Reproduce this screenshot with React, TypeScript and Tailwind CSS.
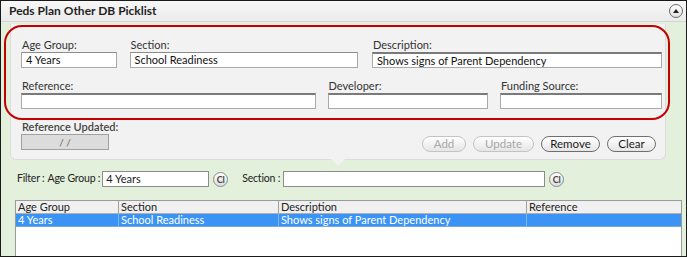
import React from 'react';

const font = { fontFamily: 'Lato, "Open Sans", sans-serif' };

const Field: React.FC<{ label: string; value?: string; w: string; dark?: boolean }> = ({ label, value, w, dark }) => (
  <div className={`flex flex-col flex-none ${w}`}>
    <span className="text-[11px] leading-[13px] text-[#333] pl-[1px] whitespace-nowrap">{label}</span>
    <div
      className={`mt-[1px] h-[16px] bg-white border border-[#a9a9a9] ${dark ? 'border-t-[#7a7a7a] border-t-2' : 'border-t-[#8c8c8c]'} px-[4px] text-[11px] leading-[13px] text-[#111] whitespace-nowrap overflow-hidden`}
    >
      {value}
    </div>
  </div>
);

const Pill: React.FC<{ label: string; w: string; disabled?: boolean }> = ({ label, w, disabled }) => (
  <div
    className={`${w} h-[16px] rounded-full border flex items-center justify-center text-[11.5px] leading-none bg-gradient-to-b from-white to-[#e6e6e6] ${
      disabled ? 'border-[#c4c4c4] text-[#a8a8a8]' : 'border-[#6f6f6f] text-[#1a1a1a]'
    }`}
  >
    {label}
  </div>
);

const ClearIcon = () => (
  <div className="flex-none w-[15px] h-[15px] rounded-full border border-[#8a8a8a] bg-gradient-to-b from-white to-[#dcdcdc] flex items-center justify-center text-[9px] leading-none text-[#444] font-bold">
    Cl
  </div>
);

export default function App() {
  return (
    <div className="w-[687px] h-[257px] border border-[#1a1a1a] bg-[#e3f0dc] overflow-hidden relative" style={font}>
      {/* title bar */}
      <div className="h-[21px] bg-gradient-to-b from-[#f7f7f7] to-[#ebebeb] border-b border-[#d4d4d4] flex items-center justify-between pl-[8px] pr-[3px]">
        <span className="text-[12px] font-bold text-[#1f1f1f] whitespace-nowrap">Peds Plan Other DB Picklist</span>
        <div className="w-[14px] h-[14px] rounded-full border border-[#6a6a6a] bg-gradient-to-b from-white to-[#e0e0e0] flex items-center justify-center">
          <div className="w-0 h-0 border-l-[3.5px] border-r-[3.5px] border-b-[4px] border-l-transparent border-r-transparent border-b-[#222]" />
        </div>
      </div>

      {/* edit panel */}
      <div className="relative ml-[9px] mt-[2px] w-[656px] h-[136px] bg-[#f2f2f2] rounded-b-[6px] border-x border-b border-[#dcdcdc] pl-[10px] pr-[3px] pt-[14px]">
        <div className="flex">
          <Field label="Age Group:" value="4 Years" w="w-[96px]" />
          <div className="w-[13px]" />
          <Field label="Section:" value="School Readiness" w="w-[228px]" />
          <div className="w-[15px]" />
          <Field label="Description:" value="Shows signs of Parent Dependency" w="w-[290px]" dark />
        </div>
        <div className="flex mt-[11px]">
          <Field label="Reference:" w="w-[295px]" dark />
          <div className="w-[12px]" />
          <Field label="Developer:" w="w-[160px]" dark />
          <div className="w-[13px]" />
          <Field label="Funding Source:" w="w-[162px]" dark />
        </div>
        <div className="flex items-start mt-[11px]">
          <div className="flex flex-col w-[88px] flex-none">
            <span className="text-[11px] leading-[13px] font-semibold text-[#444] pl-[1px] whitespace-nowrap">Reference Updated:</span>
            <div className="mt-[1px] h-[16px] bg-[#dcdcdc] border border-[#a0a0a0] flex items-center justify-center text-[10px] text-[#666]">
              / /
            </div>
          </div>
          <div className="flex-1 flex justify-end gap-[7px] mt-[16px] pr-[6px]">
            <Pill label="Add" w="w-[44px]" disabled />
            <Pill label="Update" w="w-[61px]" disabled />
            <Pill label="Remove" w="w-[59px]" />
            <Pill label="Clear" w="w-[49px]" />
          </div>
        </div>
        {/* notch */}
        <div className="absolute left-[320px] bottom-[-7px] w-0 h-0 border-l-[7px] border-r-[7px] border-t-[7px] border-l-transparent border-r-transparent border-t-[#f2f2f2]" />
      </div>

      {/* red annotation outline */}
      <div className="absolute left-[3px] top-[24px] w-[666px] h-[95px] rounded-[18px] border-2 border-[#c40000] pointer-events-none" />

      {/* filter row */}
      <div className="flex items-center h-[16px] mt-[11px] pl-[16px] text-[10.5px] tracking-[-0.2px] text-[#222] whitespace-nowrap">
        <span className="flex-none">Filter :</span>
        <span className="flex-none ml-[3px]">Age Group :</span>
        <div className="flex-none ml-[2px] w-[107px] h-[16px] bg-white border border-[#8c8c8c] px-[3px] leading-[14px] text-[11px] tracking-normal">4 Years</div>
        <div className="ml-[4px]"><ClearIcon /></div>
        <span className="ml-[14px] flex-none">Section :</span>
        <div className="flex-none ml-[3px] w-[262px] h-[16px] bg-white border border-[#8c8c8c]" />
        <div className="ml-[4px]"><ClearIcon /></div>
      </div>

      {/* grid */}
      <div className="ml-[14px] mt-[13px] w-[667px] h-[60px] bg-white border border-[#9a9a9a] text-[11px] leading-[12px] whitespace-nowrap">
        <div className="flex h-[13px] bg-[#f0f0f0] border-b border-[#b0b0b0] text-[#222]">
          <div className="w-[103px] border-r border-[#a0a0a0] pl-[2px]">Age Group</div>
          <div className="w-[160px] border-r border-[#a0a0a0] pl-[2px]">Section</div>
          <div className="w-[248px] border-r border-[#a0a0a0] pl-[2px]">Description</div>
          <div className="flex-1 pl-[2px]">Reference</div>
        </div>
        <div className="flex h-[13px] bg-[#3a93f5] text-white border-b border-[#7aa7d8]">
          <div className="w-[103px] border-r border-[#7fb6ee] pl-[2px]">4 Years</div>
          <div className="w-[160px] border-r border-[#7fb6ee] pl-[2px]">School Readiness</div>
          <div className="w-[248px] border-r border-[#7fb6ee] pl-[2px]">Shows signs of Parent Dependency</div>
          <div className="flex-1 pl-[2px]" />
        </div>
      </div>
    </div>
  );
}
